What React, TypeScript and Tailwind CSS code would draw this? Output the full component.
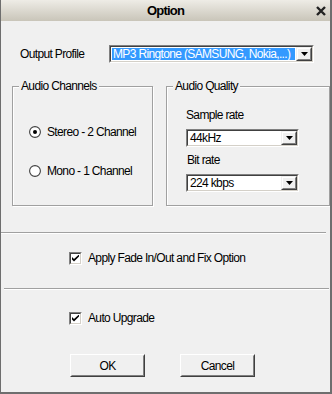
import React from "react";

const font = { fontFamily: '"Liberation Sans", Arial, sans-serif' };

function Sunken({ className = "", children }: { className?: string; children?: React.ReactNode }) {
  return (
    <div className={"border border-t-[#808080] border-l-[#808080] border-b-white border-r-white " + className}>
      <div className="h-full w-full border border-t-[#404040] border-l-[#404040] border-b-[#d4d0c8] border-r-[#d4d0c8] bg-white flex items-center">
        {children}
      </div>
    </div>
  );
}

function ArrowBtn() {
  return (
    <div className="h-full w-[16px] border border-t-[#f0f0f0] border-l-[#f0f0f0] border-b-[#404040] border-r-[#404040] bg-[#f0f0f0] shrink-0">
      <div className="h-full w-full border border-t-white border-l-white border-b-[#808080] border-r-[#808080] flex items-center justify-center">
        <svg width="7" height="4" viewBox="0 0 7 4"><path d="M0 0h7L3.5 4z" fill="#000" /></svg>
      </div>
    </div>
  );
}

function Combo({ value, highlighted, className = "" }: { value: string; highlighted?: boolean; className?: string }) {
  return (
    <Sunken className={className}>
      <div className="flex-1 h-full flex items-center p-[1px] min-w-0">
        <div className={"h-full flex items-center pl-[1px] pr-[2px] whitespace-nowrap text-[12px] leading-[14px] " + (highlighted ? "bg-[#3399ff] text-white w-full" : "text-black")}>
          {value}
        </div>
      </div>
      <ArrowBtn />
    </Sunken>
  );
}

function CheckBox() {
  return (
    <div className="w-[13px] h-[13px] border border-t-[#808080] border-l-[#808080] border-b-white border-r-white shrink-0">
      <div className="w-full h-full border border-t-[#404040] border-l-[#404040] border-b-[#d4d0c8] border-r-[#d4d0c8] bg-white flex items-center justify-center">
        <svg width="7" height="7" viewBox="0 0 7 7"><path d="M0 2v2.5l2 2 5-5V-0.5L2 4z" fill="#000" /></svg>
      </div>
    </div>
  );
}

function Radio({ checked }: { checked?: boolean }) {
  return (
    <svg width="12" height="12" viewBox="0 0 12 12" className="shrink-0">
      <circle cx="6" cy="6" r="5.4" fill="#fff" stroke="#404040" strokeWidth="1.1" />
      {checked && <circle cx="6" cy="6" r="2" fill="#000" />}
    </svg>
  );
}

function Button({ label }: { label: string }) {
  return (
    <div className="w-[75px] h-[23px] border border-t-white border-l-white border-b-[#404040] border-r-[#404040] bg-[#f0f0f0]">
      <div className="w-full h-full border border-t-[#f0f0f0] border-l-[#f0f0f0] border-b-[#808080] border-r-[#808080] flex items-center justify-center text-[12px] text-black">
        {label}
      </div>
    </div>
  );
}

function Group({ title, className = "", children }: { title: string; className?: string; children?: React.ReactNode }) {
  return (
    <div className={"relative border border-[#a0a0a0] shadow-[inset_1px_1px_0_#fff,1px_1px_0_#fff] " + className}>
      <div className="absolute left-[6px] top-[-8px] bg-[#f0f0f0] px-[2px] text-[12px] leading-[14px] text-black">{title}</div>
      {children}
    </div>
  );
}

export default function App() {
  return (
    <div className="w-[332px] h-[394px] bg-[#f0f0f0] flex flex-col border-l border-r-2 border-b-2 border-[#6e6e6e] overflow-hidden text-[12px]" style={{ ...font, letterSpacing: "-0.65px" }}>
      <div className="h-[21px] shrink-0 bg-gradient-to-b from-[#eeece6] to-[#c9c5b9] relative flex items-center justify-center">
        <span className="text-[13px] font-bold text-black tracking-[-0.8px]">Option</span>
        <svg className="absolute right-[4px] top-[6px]" width="10" height="10" viewBox="0 0 10 10">
          <path d="M1 1L9 9M9 1L1 9" stroke="#222" strokeWidth="2.4" />
        </svg>
      </div>
      <div className="flex flex-col">
        <div className="flex items-center mt-[24px] h-[18px]">
          <span className="ml-[19px] w-[89px] text-black">Output Profile</span>
          <Combo value="MP3 Ringtone (SAMSUNG, Nokia,...)" highlighted className="w-[205px] h-[18px]" />
        </div>
        <div className="flex mt-[23px] ml-[11px]">
          <Group title="Audio Channels" className="w-[141px] h-[120px]">
            <div className="flex flex-col pl-[16px] pt-[39px] gap-[27px]">
              <div className="flex items-center gap-[6px] h-[12px] text-black"><Radio checked />Stereo - 2 Channel</div>
              <div className="flex items-center gap-[6px] h-[12px] text-black"><Radio />Mono - 1 Channel</div>
            </div>
          </Group>
          <Group title="Audio Quality" className="w-[164px] h-[120px] ml-[13px]">
            <div className="flex flex-col pl-[19px] pt-[21px]">
              <span className="text-black leading-[14px]">Sample rate</span>
              <Combo value="44kHz" className="w-[113px] h-[18px] mt-[7px]" />
              <span className="text-black leading-[14px] mt-[6px] ml-[1px]">Bit rate</span>
              <Combo value="224 kbps" className="w-[113px] h-[18px] mt-[7px]" />
            </div>
          </Group>
        </div>
        <div className="mt-[26px] w-[325px] h-[2px] border-t border-[#a0a0a0] border-b-white border-b" />
        <div className="flex items-center mt-[18px] ml-[68px] h-[13px] gap-[6px] leading-[13px] text-black">
          <CheckBox />Apply Fade In/Out and Fix Option
        </div>
        <div className="mt-[23px] ml-[3px] w-[325px] h-[2px] border-t border-[#a0a0a0] border-b-white border-b" />
        <div className="flex items-center mt-[22px] ml-[68px] h-[13px] gap-[6px] leading-[13px] text-black">
          <CheckBox />Auto Upgrade
        </div>
        <div className="flex mt-[29px] ml-[69px] gap-[35px]">
          <Button label="OK" />
          <Button label="Cancel" />
        </div>
      </div>
    </div>
  );
}
